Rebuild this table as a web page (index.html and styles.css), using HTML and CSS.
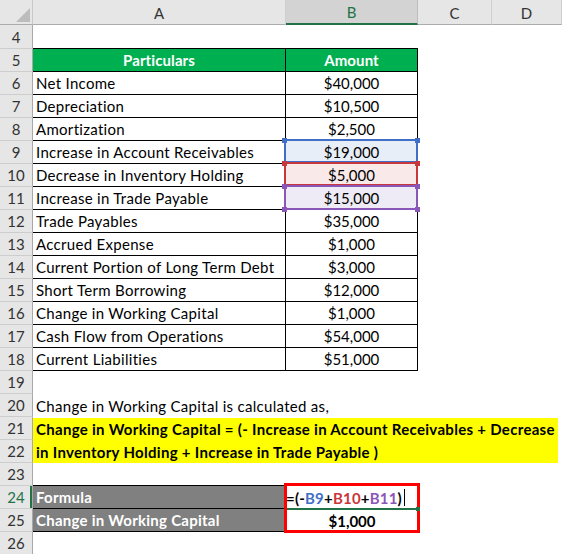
FILE: index.html
```html
<!DOCTYPE html>
<html>
<head>
<meta charset="utf-8">
<link rel="stylesheet" href="styles.css">
</head>
<body>
<div class="sheet">
  <div class="corner"><span class="tri"></span></div>
  <div class="ch">A</div><div class="ch sel">B</div><div class="ch">C</div><div class="ch">D</div>

  <div class="rh">4</div><div class="c bb"></div><div class="c bb"></div><div class="c"></div><div class="c"></div>
  <div class="rh">5</div><div class="c ta hd">Particulars</div><div class="c tb hd">Amount</div><div class="c"></div><div class="c"></div>
  <div class="rh">6</div><div class="c ta">Net Income</div><div class="c tb">$40,000</div><div class="c"></div><div class="c"></div>
  <div class="rh">7</div><div class="c ta">Depreciation</div><div class="c tb">$10,500</div><div class="c"></div><div class="c"></div>
  <div class="rh">8</div><div class="c ta">Amortization</div><div class="c tb">$2,500</div><div class="c"></div><div class="c"></div>
  <div class="rh">9</div><div class="c ta">Increase in Account Receivables</div><div class="c tb rng blue"><i class="hdl tl"></i><i class="hdl tr"></i>$19,000</div><div class="c"></div><div class="c"></div>
  <div class="rh">10</div><div class="c ta">Decrease in Inventory Holding</div><div class="c tb rng red"><i class="hdl tl"></i><i class="hdl tr"></i>$5,000</div><div class="c"></div><div class="c"></div>
  <div class="rh">11</div><div class="c ta">Increase in Trade Payable</div><div class="c tb rng purple last"><i class="hdl tl"></i><i class="hdl tr"></i><i class="hdl bl"></i><i class="hdl br"></i>$15,000</div><div class="c"></div><div class="c"></div>
  <div class="rh">12</div><div class="c ta">Trade Payables</div><div class="c tb">$35,000</div><div class="c"></div><div class="c"></div>
  <div class="rh">13</div><div class="c ta">Accrued Expense</div><div class="c tb">$1,000</div><div class="c"></div><div class="c"></div>
  <div class="rh">14</div><div class="c ta">Current Portion of Long Term Debt</div><div class="c tb">$3,000</div><div class="c"></div><div class="c"></div>
  <div class="rh">15</div><div class="c ta">Short Term Borrowing</div><div class="c tb">$12,000</div><div class="c"></div><div class="c"></div>
  <div class="rh">16</div><div class="c ta">Change in Working Capital</div><div class="c tb">$1,000</div><div class="c"></div><div class="c"></div>
  <div class="rh">17</div><div class="c ta">Cash Flow from Operations</div><div class="c tb">$54,000</div><div class="c"></div><div class="c"></div>
  <div class="rh">18</div><div class="c ta">Current Liabilities</div><div class="c tb">$51,000</div><div class="c"></div><div class="c"></div>
  <div class="rh">19</div><div class="c"></div><div class="c"></div><div class="c"></div><div class="c"></div>
  <div class="rh">20</div><div class="c wide">Change in Working Capital is calculated as,</div>
  <div class="rh">21</div><div class="yellow">Change in Working Capital = (- Increase in Account Receivables + Decrease<br>in Inventory Holding + Increase in Trade Payable )</div>
  <div class="rh">22</div>
  <div class="rh">23</div><div class="c bb"></div><div class="c"></div><div class="c"></div><div class="c"></div>
  <div class="rh active">24</div><div class="c gray">Formula</div><div class="c formula"><span class="redbox"></span><span class="f">=(-<b class="r1">B9</b>+<b class="r2">B10</b>+<b class="r3">B11</b>)</span><span class="caret"></span><i class="act-line"></i><i class="act-hdl"></i></div><div class="c"></div><div class="c"></div>
  <div class="rh">25</div><div class="c gray">Change in Working Capital</div><div class="c result">$1,000</div><div class="c"></div><div class="c"></div>
  <div class="rh">26</div><div class="c"></div><div class="c"></div><div class="c"></div><div class="c"></div>
</div>
</body>
</html>
```

FILE: styles.css
```css
html, body {
  margin: 0;
  padding: 0;
  background: #ffffff;
  overflow: hidden;
}

.sheet {
  display: grid;
  grid-template-columns: 33px 253px 132px 74px 70px;
  grid-template-rows: 25px 24px repeat(22, 23px);
  width: 562px;
  font-family: "Lato", "Liberation Sans", sans-serif;
  font-size: 15px;
  color: #000;
}

.corner {
  box-sizing: border-box;
  background: #e6e6e6;
  border-right: 1px solid #c8c8c8;
  border-bottom: 1px solid #ababab;
  display: flex;
  justify-content: flex-end;
  align-items: flex-end;
  padding: 0 2px 2px 0;
}

.tri {
  width: 0;
  height: 0;
  border-left: 14px solid transparent;
  border-bottom: 14px solid #bcbcbc;
}

.ch {
  box-sizing: border-box;
  background: #e6e6e6;
  border-right: 1px solid #d0d0d0;
  border-bottom: 1px solid #ababab;
  display: flex;
  align-items: center;
  justify-content: center;
  color: #333;
  padding-top: 1px;
}

.ch.sel {
  background: #d3d3d3;
  color: #217346;
  border-bottom: 2px solid #217346;
  border-right-color: #bdbdbd;
}

.rh {
  box-sizing: border-box;
  background: #e6e6e6;
  border-right: 1px solid #a8a8a8;
  border-bottom: 1px solid #cdcdcd;
  display: flex;
  align-items: center;
  justify-content: center;
  color: #333;
}

.rh.active {
  color: #217346;
  box-shadow: inset -2px 0 0 #217346;
}

.c {
  box-sizing: border-box;
  display: flex;
  align-items: center;
  padding: 0 3px;
  white-space: nowrap;
  min-width: 0;
  position: relative;
}

.bb {
  border-bottom: 1px solid #000;
}

.ta {
  border-right: 1px solid #000;
  border-bottom: 1px solid #000;
  letter-spacing: 0.3px;
}

.tb {
  border-right: 1px solid #000;
  border-bottom: 1px solid #000;
  justify-content: center;
}

.hd {
  background: #00b050;
  color: #fff;
  font-weight: bold;
  justify-content: center;
  letter-spacing: 0.1px;
}

.wide {
  grid-column: span 4;
  letter-spacing: 0.3px;
}

.yellow {
  grid-column: span 4;
  grid-row: span 2;
  background: #ffff00;
  margin-right: 4px;
  margin-top: 1px;
  padding: 0 0 0 3px;
  font-weight: bold;
  line-height: 23px;
  white-space: nowrap;
  letter-spacing: 0.3px;
}

/* range highlights */
.rng::before {
  content: "";
  position: absolute;
  left: -2px;
  top: -2px;
  right: -1px;
  bottom: 0;
  border: 2px solid;
  pointer-events: none;
}

.rng.last::before {
  bottom: -1px;
}

.blue { background: #e8eef8; }
.blue::before { border-color: #3f6fc6; }
.blue .hdl { background-color: #3f6fc6; }

.red { background: #f9e9e9; }
.red::before { border-color: #c8373c; }
.red .hdl { background-color: #c8373c; }

.purple { background: #efebf6; }
.purple::before { border-color: #8a57b8; }
.purple .hdl { background-color: #8a57b8; }

.hdl {
  position: absolute;
  width: 5px;
  height: 5px;
  z-index: 1;
}
.hdl.tl { left: -4px; top: -3px; }
.hdl.tr { right: -3px; top: -3px; }
.hdl.bl { left: -4px; bottom: -3px; }
.hdl.br { right: -3px; bottom: -3px; }

.gray {
  background: #808080;
  color: #fff;
  font-weight: bold;
  border-right: 1px solid #000;
  border-bottom: 1px solid #000;
  letter-spacing: 0.25px;
}

.formula {
  padding-left: 0;
  font-weight: bold;
  letter-spacing: 0.2px;
}

.f b { font-weight: bold; }
.r1 { color: #3f6fc6; }
.r2 { color: #c8373c; }
.r3 { color: #8a57b8; }

.caret {
  display: inline-block;
  width: 1px;
  height: 17px;
  background: #000;
  margin-left: 2px;
}

.redbox {
  position: absolute;
  left: -2px;
  top: -3px;
  width: 136px;
  height: 50px;
  box-sizing: border-box;
  border: 3px solid #ff0000;
  z-index: 2;
}

.act-line {
  position: absolute;
  left: 0;
  right: 1px;
  bottom: -1px;
  height: 2px;
  background: #217346;
  z-index: 1;
}

.act-hdl {
  position: absolute;
  right: -2px;
  bottom: -2px;
  width: 4px;
  height: 4px;
  background: #217346;
  z-index: 3;
}

.result {
  justify-content: center;
  font-weight: bold;
}
```
